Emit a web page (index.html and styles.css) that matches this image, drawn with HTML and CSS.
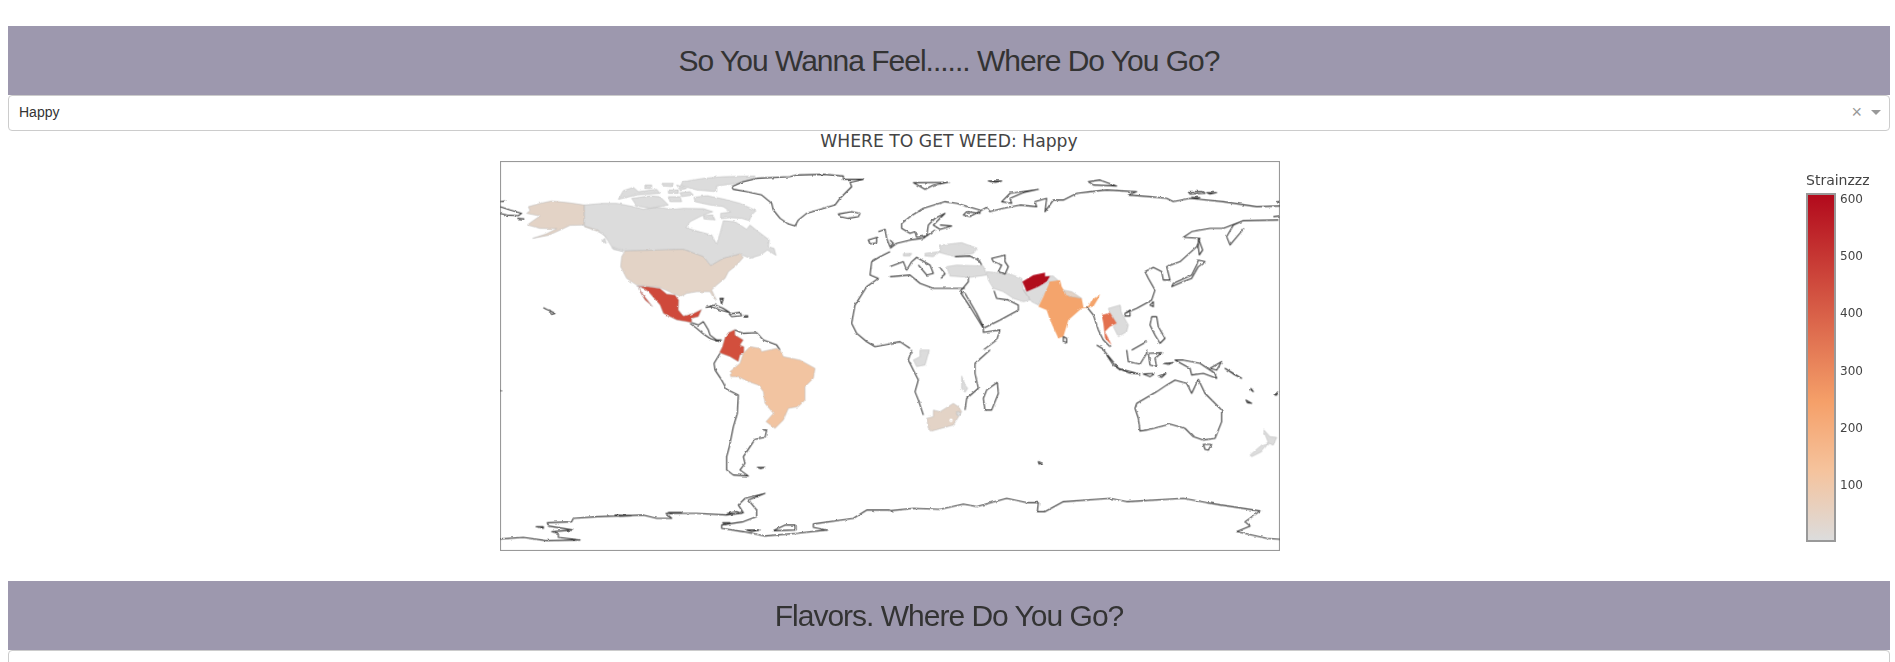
FILE: index.html
```html
<!DOCTYPE html>
<html lang="en">
<head>
<meta charset="utf-8">
<title>Where Do You Go?</title>
<link rel="stylesheet" href="styles.css">
</head>
<body>
<main class="page">
  <h2 class="banner">So You Wanna Feel...... Where Do You Go?</h2>
  <div class="select">
    <span class="select-value">Happy</span>
    <span class="select-clear">×</span>
    <span class="select-arrow"></span>
  </div>
  <section class="plot">
    <div class="plot-title">WHERE TO GET WEED: Happy</div>
    <div class="plot-row">
      <svg class="map" viewBox="0 0 2340 1170" aria-label="World map">
        <defs>
          <filter id="rough" filterUnits="userSpaceOnUse" x="0" y="0" width="2340" height="1170">
            <feTurbulence type="fractalNoise" baseFrequency="0.07" numOctaves="2" seed="4" result="noise"/>
            <feDisplacementMap in="SourceGraphic" in2="noise" scale="7" xChannelSelector="R" yChannelSelector="G"/>
          </filter>
        </defs>
        <rect class="frame" x="1.5" y="1.5" width="2337" height="1167"/>
        <g class="geo">
        <g transform="translate(-30 -33)">
          <path class="c-low" d="M283,165 L235,158 L185,153 L150,160 L115,170 L120,182 L110,190 L150,198 L125,215 L112,225 L150,235 L200,236 L168,252 L128,265 L175,256 L215,238 L240,226 L283,225 L305,232 L328,240 L356,270 L340,252 L320,243 L283,230 Z"/>
          <path class="c-grey" d="M283,165 L283,228 L320,240 L345,258 L365,290 L405,303 L580,298 L640,320 L662,347 L700,325 L750,312 L780,325 L812,315 L832,300 L858,316 L852,295 L835,290 L838,270 L805,245 L780,225 L770,238 L735,215 L700,212 L690,250 L680,283 L665,255 L620,243 L588,233 L600,215 L640,195 L668,185 L640,176 L580,175 L550,178 L500,172 L460,178 L430,170 L380,160 L340,160 Z"/>
          <path class="c-grey" d="M612,142 L650,137 L700,147 L750,160 L798,182 L785,195 L778,212 L755,205 L720,203 L692,206 L692,190 L722,186 L700,170 L660,165 L615,155 Z M578,95 L640,85 L700,80 L795,78 L790,88 L740,100 L680,108 L680,125 L620,120 L572,106 Z M425,145 L480,138 L510,140 L535,165 L480,175 L440,168 Z M400,122 L430,112 L445,125 L500,118 L510,130 L440,135 L385,148 Z M515,100 L550,100 L545,110 L520,108 Z M560,105 L590,115 L570,120 Z M535,120 L565,120 L565,130 L535,130 Z M570,128 L600,125 L610,135 L575,140 Z M535,140 L570,140 L575,155 L540,155 Z M465,105 L485,105 L485,115 L465,115 Z M640,197 L668,195 L675,210 L642,207 Z M345,265 L335,272 L348,280 Z M365,292 L400,305 L370,298 Z"/>
          <path class="c-low" d="M405,303 L580,298 L640,320 L662,347 L700,325 L750,312 L760,322 L740,345 L715,365 L705,385 L680,405 L665,420 L680,452 L672,445 L660,425 L620,425 L590,430 L572,440 L560,435 L510,412 L440,405 L410,385 L392,350 L395,320 Z"/>
          <path class="c-mex" d="M440,408 L475,410 L510,415 L530,432 L555,435 L566,450 L565,480 L580,498 L610,490 L635,478 L625,500 L605,505 L605,518 L590,515 L560,510 L520,490 L510,465 L475,425 L460,415 Z M445,412 L460,435 L488,470 L465,450 L450,425 Z"/>
          <path class="c-col" d="M735,538 L715,548 L705,562 L697,590 L688,608 L720,620 L745,635 L750,615 L762,610 L762,590 L750,585 L760,570 L735,555 Z"/>
          <path class="coast" d="M725,110 L760,95 L800,85 L900,80 L920,75 L1000,73 L1060,78 L1060,88 L1120,88 L1080,97 L1085,110 L1070,125 L1050,145 L1035,165 L990,178 L950,190 L925,210 L915,228 L895,222 L870,205 L850,180 L845,160 L815,135 L770,125 L730,118 Z M1045,192 L1085,185 L1110,190 L1105,200 L1075,205 L1050,200 Z M30,155 L45,153 M30,170 L60,180 L95,190 L85,197 L50,195 L30,190 M82,205 L103,207 M648,472 L675,465 L700,475 L720,488 L690,480 L665,470 Z M718,492 L750,487 L755,497 L725,500 Z M762,497 L773,497 L773,501 L762,501 Z M690,445 L700,445 L695,462 Z M605,518 L625,525 L640,515 L655,540 L660,555 L680,570 L695,570 M600,520 L620,535 L640,552 L660,565 L688,575 M735,540 L760,550 L800,548 L820,570 L860,585 L870,600 M160,473 L170,478 L180,482 L195,490 L185,493 L178,485 M1135,270 L1160,262 L1160,278 L1140,282 Z M1165,245 L1185,238 L1190,265 L1200,290 M1200,305 L1170,320 L1145,335 L1140,375 L1165,385 L1130,410 L1095,465 L1085,520 L1100,550 L1130,575 L1155,590 L1200,582 M30,722 L34,722"/>
        </g>
        <g transform="translate(1170 -33)">
          <path class="c-grey" d="M150,285 L215,278 L262,295 L250,310 L195,320 L150,308 Z M40,311 L65,310 L60,318 L40,318 Z M105,310 L150,305 L130,320 L105,318 Z M170,350 L200,345 L280,348 L290,375 L240,382 L180,378 Z M290,365 L360,372 L395,385 L400,420 L420,450 L400,455 L370,445 L340,425 L310,415 L295,390 Z M400,420 L440,410 L480,395 L490,400 L460,435 L445,465 L425,455 Z M465,378 L490,378 L505,392 L480,395 L470,395 Z M655,475 L690,465 L695,490 L715,525 L710,545 L685,560 L670,530 L680,520 L660,488 Z"/>
          <path class="c-afg" d="M397,395 L430,375 L465,368 L465,380 L480,378 L470,395 L445,410 L410,425 Z"/>
          <path class="c-ind" d="M480,395 L510,390 L515,410 L530,435 L575,445 L580,470 L595,468 L605,450 L630,432 L625,445 L610,470 L575,475 L535,510 L520,560 L505,565 L480,510 L470,480 L445,470 L460,440 Z"/>
          <path class="c-low" d="M520,420 L545,425 L575,445 L535,438 Z"/>
          <path class="c-tha" d="M635,495 L660,488 L680,520 L660,530 L645,545 L660,575 L665,585 L645,565 L640,520 Z"/>
          <path class="coast" d="M70,98 L175,97 L130,105 L105,118 Z M295,93 L335,93 L315,97 Z M335,155 L360,130 L445,118 L400,128 L360,145 L365,160 Z M595,95 L630,90 L680,108 L610,105 Z M895,125 L940,125 L945,130 L900,132 Z M950,128 L980,128 L960,132 Z M905,142 L930,143 L920,146 Z M1160,155 L1170,155 M35,220 L60,200 L100,175 L165,155 L200,160 L270,180 L270,190 L230,185 L220,195 L240,200 L290,172 L300,185 L340,175 L390,165 L440,170 L435,155 L470,145 L465,185 L490,150 L520,150 L560,130 L600,125 L650,120 L740,125 L715,135 L780,140 L830,145 L850,155 L900,145 L1000,155 L1100,170 L1170,168 M35,220 L35,235 L60,250 L75,245 L80,262 L110,258 L115,225 L135,205 L165,190 L130,225 L150,238 L185,228 L150,225 M135,240 L100,265 L60,270 L20,280 L0,295 M0,270 L10,280 L0,290 M0,350 L40,335 L50,360 L65,335 L80,322 L120,345 L130,370 L110,375 L85,345 M150,352 L165,372 L150,385 M195,320 L240,318 L268,332 L275,345 M305,325 L345,315 L345,335 L355,350 L345,372 L325,365 L335,345 L310,335 Z M235,380 L235,395 L210,425 L240,470 L280,535 L330,510 L385,480 L385,465 L355,450 L320,445 L312,422 M0,380 L60,375 L90,400 L130,415 L170,415 L225,415 M210,425 L225,430 L260,490 L280,530 L280,547 L330,540 L320,570 L280,600 M520,560 L530,565 L530,578 L520,575 Z M590,470 L610,495 L625,540 L640,570 L660,590 M705,490 L740,475 L785,450 L795,420 L775,385 L765,365 L790,352 L815,365 L820,390 L840,390 L830,350 L870,335 L920,290 L930,265 L880,262 L905,245 L960,235 L1000,235 L1060,212 L1165,210 M1060,212 L1030,225 L1010,260 L1020,285 L1062,235 M1150,200 L1168,198 M845,410 L880,395 L905,385 L925,350 L945,335 L925,330 L920,345 L905,375 L850,400 Z M925,265 L938,300 L928,315 L925,290 Z M705,490 L720,480 L720,498 L705,498 Z M780,465 L790,455 L790,470 Z M785,500 L800,500 L805,530 L825,565 L810,580 L795,555 L780,525 Z M0,580 L30,575 L60,595 M620,585 L645,600 M725,600 L770,575"/>
        </g>
        <g transform="translate(-30 567)">
          <path class="c-bra" d="M720,65 L750,40 L760,10 L780,-10 L810,-5 L815,5 L860,-5 L870,0 L880,20 L930,30 L975,55 L970,85 L945,110 L945,150 L925,170 L895,175 L880,210 L855,235 L828,215 L850,190 L825,160 L820,125 L805,105 L775,95 L745,80 L722,80 Z"/>
          <path class="coast" d="M690,10 L672,40 L675,60 L695,90 L710,118 L745,135 L742,190 L730,230 L718,290 L710,320 L710,360 L730,375 L775,378 L750,360 L765,340 L760,320 L780,290 L795,268 L825,262 L830,240 L820,240 M802,352 L825,352 L812,356 Z M30,567 L100,562 L170,572 L270,570 L205,562 L205,550 L185,545 L248,540 L175,528 L172,518 L245,515 L250,505 L320,500 L460,495 L500,505 L545,505 L528,490 L620,490 L710,495 L760,488 L745,465 L765,445 L825,430 L775,450 L800,480 L800,500 L760,515 L695,525 L695,535 L760,545 L825,558 L920,550 L1010,540 L970,532 L970,522 L1090,505 L1130,480 L1200,480 M138,530 L160,530 L160,535 Z M712,490 L740,485 L755,490 L735,492 Z M535,487 L575,487 L540,491 Z M770,540 L810,540 L785,545 Z M850,542 L885,525 L915,525 L915,540 Z M375,495 L425,497 L390,499 Z M698,518 L720,518 L705,523 Z"/>
        </g>
        <g transform="translate(1170 567)">
          <path class="c-grey" d="M90,0 L118,0 L105,45 L80,50 L70,30 L90,20 Z M215,78 L225,105 L233,115 L225,127 L215,115 Z M1122,240 L1140,260 L1160,262 L1150,285 L1135,280 L1115,305 L1085,320 L1080,315 L1115,285 L1135,278 L1122,245 Z"/>
          <path class="c-low" d="M110,205 L130,200 L130,180 L150,185 L190,160 L205,170 L215,185 L190,225 L125,243 L115,235 Z"/>
          <circle class="hole" cx="183" cy="211" r="5"/>
          <circle class="c-grey" cx="205" cy="190" r="6"/>
          <path class="coast" d="M300,0 L255,40 L255,70 L265,115 L230,145 L225,180 M100,195 L85,150 L75,125 L85,90 L55,30 L65,0 M322,97 L325,130 L305,180 L285,180 L280,145 L290,120 Z M740,160 L800,125 L830,105 L855,90 L890,100 L905,130 L925,88 L945,130 L995,180 L995,215 L975,265 L940,270 L910,260 L885,235 L840,222 L770,240 L750,243 L745,205 L735,175 Z M940,283 L965,283 L955,300 L945,298 Z M640,0 L690,60 L670,45 L650,15 M685,55 L750,72 L715,68 Z M710,0 L715,35 L750,42 L770,10 L770,0 M775,10 L815,8 L795,25 L800,50 L780,45 Z M880,30 L930,40 L975,70 L980,85 L940,70 L905,75 L900,55 L855,30 Z M960,55 L995,35 L980,60 Z M760,72 L795,70 L780,80 Z M805,78 L828,70 L815,82 Z M820,40 L850,38 L835,43 Z M1005,55 L1055,85 L1030,72 Z M445,335 L458,340 L447,342 Z M1083,115 L1090,125 L1083,120 Z M1068,150 L1085,160 L1072,158 Z M1152,135 L1165,125 L1160,135 Z M0,482 L70,475 L150,478 L220,462 L260,470 L350,445 L410,458 L445,458 L442,485 L465,485 L520,455 L660,445 L710,455 L880,445 L950,458 L1110,483 L1065,515 L1080,528 L1040,545 L1130,565 L1170,568"/>
        </g>
        </g>
      </svg>
      <div class="colorbar">
        <div class="colorbar-title">Strainzzz</div>
        <div class="colorbar-body">
          <div class="colorbar-ramp"></div>
          <ul class="colorbar-ticks">
            <li>600</li><li>500</li><li>400</li><li>300</li><li>200</li><li>100</li>
          </ul>
        </div>
      </div>
    </div>
  </section>
  <h2 class="banner banner-second">Flavors. Where Do You Go?</h2>
  <div class="select"></div>
</main>
</body>
</html>
```
FILE: styles.css
```css
html, body {
  margin: 0;
  height: 662px;
  overflow: hidden;
  background: #fff;
}
.page {
  padding: 26px 5px 0 8px;
  font-family: "Liberation Sans", Arial, sans-serif;
  color: #333;
}
.banner {
  margin: 0;
  height: 69px;
  line-height: 70px;
  background: #9d98ae;
  text-align: center;
  font-size: 30px;
  font-weight: 400;
  letter-spacing: -1px;
  color: #333;
}
.banner-second {
  margin-top: 30px;
}
.select {
  box-sizing: border-box;
  height: 36px;
  display: flex;
  align-items: center;
  background: #fff;
  border: 1px solid #ccc;
  border-radius: 4px;
  padding: 0 8px 2px 10px;
  font-size: 14px;
}
.select-value {
  flex: 1;
}
.select-clear {
  color: #999;
  font-size: 18px;
  margin-right: 9px;
}
.select-arrow {
  width: 0;
  height: 0;
  border-style: solid;
  border-width: 5px 5px 0;
  border-color: #999 transparent transparent;
}
.plot {
  color: #444;
  font-family: "DejaVu Sans", Verdana, sans-serif;
}
.plot-title {
  height: 30px;
  line-height: 20px;
  text-align: center;
  font-size: 17.2px;
}
.plot-row {
  display: flex;
  align-items: flex-start;
}
.map {
  display: block;
  flex: none;
  width: 780px;
  height: 390px;
  margin-left: 492px;
}
.frame {
  fill: #fff;
  stroke: #999;
  stroke-width: 3.5;
}
.geo {
  filter: url(#rough);
}
.coast {
  fill: none;
  stroke: #3a3a3a;
  stroke-width: 3.3;
  stroke-linejoin: round;
}
.c-grey, .c-low, .c-mex, .c-col, .c-bra, .c-afg, .c-ind, .c-tha {
  stroke: #b5b5b5;
  stroke-width: 1.5;
  stroke-linejoin: round;
}
.c-grey { fill: #dcdcdc; }
.c-low { fill: #e3d3c6; }
.c-mex { fill: #cf4a3a; }
.c-col { fill: #d24f3c; }
.c-bra { fill: #f2c4a1; }
.c-afg { fill: #b10a1c; stroke: none; }
.c-ind { fill: #f4a46c; stroke: none; }
.c-tha { fill: #e37150; stroke: none; }
.hole { fill: #fff; }
.colorbar {
  flex: none;
  margin-left: 526px;
  width: 75px;
}
.colorbar-title {
  font-size: 14px;
  line-height: 18px;
  height: 18px;
  margin-top: 10px;
  margin-bottom: 4px;
}
.colorbar-body {
  display: flex;
  gap: 4px;
}
.colorbar-ramp {
  flex: none;
  box-sizing: border-box;
  width: 30px;
  height: 349px;
  border: 2px solid #999;
  background: linear-gradient(to top, #dcdcdc 0%, #f5c39d 20%, #f5a069 40%, #b20a1c 100%);
}
.colorbar-ticks {
  list-style: none;
  margin: 0;
  padding: 0;
  font-size: 12px;
}
.colorbar-ticks li {
  height: 57.2px;
  line-height: 12px;
}
```
